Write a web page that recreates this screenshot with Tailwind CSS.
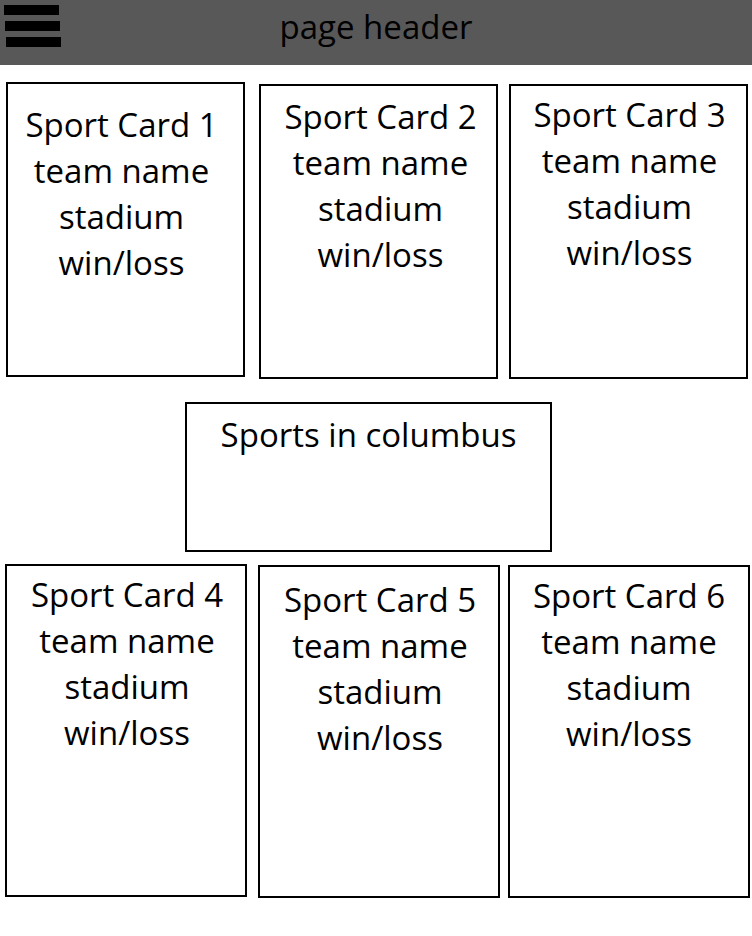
<!DOCTYPE html>
<html lang="en">
<head>
<meta charset="utf-8">
<meta name="viewport" content="width=device-width, initial-scale=1">
<title>Sports in columbus</title>
<script src="https://cdn.jsdelivr.net/npm/@tailwindcss/browser@4"></script>
</head>
<body class="min-h-screen bg-white font-['Open_Sans','Noto_Sans',sans-serif] text-[33px] leading-[46px] text-black">
<header class="grid grid-cols-[64px_1fr_64px] items-start bg-[#585858] pb-[15px]">
<button type="button" aria-label="Open menu" class="pt-[5px] pl-1">
<svg class="h-[42px] w-[57px]" viewBox="0 0 57 42" aria-hidden="true"><path d="M0 0h55v10H0zM1 16h55v10H1zM2 32h55v10H2z"/></svg>
</button>
<h1 class="pt-1 text-center">page header</h1>
</header>
<main class="pt-[17px] text-center">
<section class="grid grid-cols-[253fr_250fr_239fr] pr-1 pl-[6px]">
<article class="mr-[14px] mb-[2px] min-h-[295px] border-2 border-black pt-[18px] pr-2"><h2>Sport Card 1</h2><p>team name</p><p>stadium</p><p>win/loss</p></article>
<article class="mt-[2px] mr-[11px] min-h-[295px] border-2 border-black pt-2 pl-1"><h2>Sport Card 2</h2><p>team name</p><p>stadium</p><p>win/loss</p></article>
<article class="mt-[2px] min-h-[295px] border-2 border-black pt-[6px] pl-[2px]"><h2>Sport Card 3</h2><p>team name</p><p>stadium</p><p>win/loss</p></article>
</section>
<section class="flex justify-center pt-[23px] pr-[15px] pb-3">
<div class="min-h-[150px] w-[367px] max-w-full border-2 border-black pt-2"><h2>Sports in columbus</h2></div>
</section>
<section class="grid grid-cols-[253fr_250fr_242fr] pr-[2px] pl-[5px]">
<article class="mr-[11px] mb-px min-h-[333px] border-2 border-black pt-[6px] pl-[2px]"><h2>Sport Card 4</h2><p>team name</p><p>stadium</p><p>win/loss</p></article>
<article class="mt-px mr-2 min-h-[333px] border-2 border-black pt-[10px] pl-[2px]"><h2>Sport Card 5</h2><p>team name</p><p>stadium</p><p>win/loss</p></article>
<article class="mt-px min-h-[333px] border-2 border-black pt-[6px]"><h2>Sport Card 6</h2><p>team name</p><p>stadium</p><p>win/loss</p></article>
</section>
</main>
</body>
</html>
